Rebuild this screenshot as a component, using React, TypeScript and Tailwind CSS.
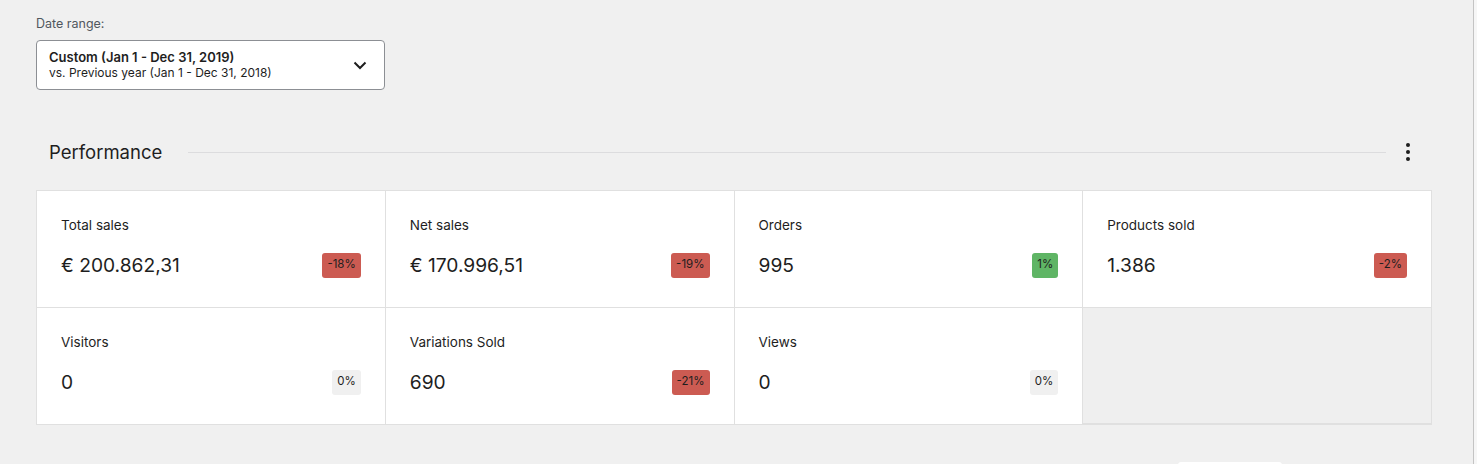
import React from "react";

type Metric = { label: string; value: string; delta: string; tone: "red" | "green" | "neutral" };

const metrics: Metric[] = [
  { label: "Total sales", value: "€ 200.862,31", delta: "-18%", tone: "red" },
  { label: "Net sales", value: "€ 170.996,51", delta: "-19%", tone: "red" },
  { label: "Orders", value: "995", delta: "1%", tone: "green" },
  { label: "Products sold", value: "1.386", delta: "-2%", tone: "red" },
  { label: "Visitors", value: "0", delta: "0%", tone: "neutral" },
  { label: "Variations Sold", value: "690", delta: "-21%", tone: "red" },
  { label: "Views", value: "0", delta: "0%", tone: "neutral" },
];

const toneClass = {
  red: "bg-[#cc5b52] text-[#1e1e1e]",
  green: "bg-[#5fb565] text-[#1e1e1e]",
  neutral: "bg-[#f0f0f0] text-[#1e1e1e]",
};

function Cell({ m }: { m: Metric }) {
  return (
    <div className="bg-white h-[116px] px-6 pt-[25px] flex flex-col">
      <div className="text-[13.5px] leading-[18px] text-[#1e1e1e]">{m.label}</div>
      <div className="mt-[17px] flex items-center justify-between h-[28px]">
        <span className="text-[19.2px] leading-[28px] text-[#1e1e1e]">{m.value}</span>
        <span
          className={`h-[25px] px-[5px] rounded-[3px] flex items-center text-[11.5px] leading-none ${toneClass[m.tone]}`}
        >
          {m.delta}
        </span>
      </div>
    </div>
  );
}

export default function App() {
  return (
    <div
      className="w-[1477px] h-[464px] bg-[#f0f0f0] flex overflow-hidden"
      style={{ fontFamily: 'Inter, "Noto Sans", "Liberation Sans", sans-serif' }}
    >
      <div className="flex-1 flex flex-col pl-9 pr-[41px] pt-4 relative">
        <div className="text-[12.5px] leading-4 text-[#50575e]">Date range:</div>
        <button className="mt-2 w-[349px] h-[50px] bg-white border border-[#8c8f94] rounded-[4px] flex items-center justify-between pl-3 pr-4 text-left">
          <div className="flex flex-col pt-[1px]">
            <span className="text-[13px] leading-[15px] font-semibold text-[#1e1e1e]">
              Custom (Jan 1 - Dec 31, 2019)
            </span>
            <span className="text-[12px] leading-[16px] text-[#1e1e1e]">
              vs. Previous year (Jan 1 - Dec 31, 2018)
            </span>
          </div>
          <svg width="14" height="9" viewBox="0 0 14 9" fill="none" className="mr-[1px]">
            <path d="M1.5 1.5 L7 7 L12.5 1.5" stroke="#1e1e1e" strokeWidth="2" />
          </svg>
        </button>

        <div className="mt-[48px] h-[28px] flex items-center pl-[13px] pr-3">
          <h2 className="text-[18.5px] leading-[28px] text-[#1e1e1e] font-normal">Performance</h2>
          <div className="flex-1 h-px bg-[#dcdcde] ml-[26px] mr-[10px]" />
          <div className="w-6 h-6 flex flex-col items-center justify-center gap-[3px]">
            <span className="w-1 h-1 rounded-full bg-[#1e1e1e]" />
            <span className="w-1 h-1 rounded-full bg-[#1e1e1e]" />
            <span className="w-1 h-1 rounded-full bg-[#1e1e1e]" />
          </div>
        </div>

        <div className="mt-6 grid grid-cols-4 gap-px bg-[#e0e0e0] border border-[#e0e0e0]">
          {metrics.map((m) => (
            <Cell key={m.label} m={m} />
          ))}
          <div className="bg-[#efefef] h-[115px]" />
        </div>

        <div className="absolute left-[1178px] top-[462px] w-[104px] h-[6px] bg-white rounded-t-[3px]" />
      </div>
      <div className="w-[4px] h-full border-l border-[#c4c4c4] bg-[#f6f6f6]" />
    </div>
  );
}
